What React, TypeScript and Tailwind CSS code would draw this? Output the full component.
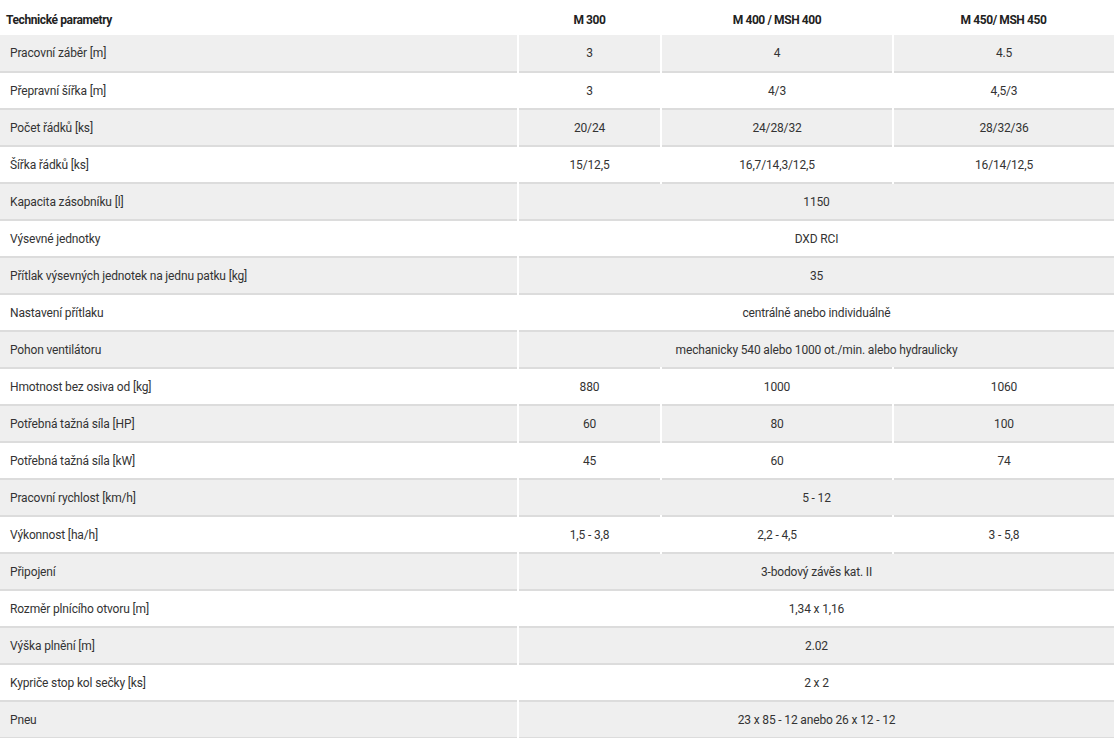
type Row = { label: string; values: string[] };

const rows: Row[] = [
  { label: 'Pracovní záběr [m]', values: ['3', '4', '4.5'] },
  { label: 'Přepravní šířka [m]', values: ['3', '4/3', '4,5/3'] },
  { label: 'Počet řádků [ks]', values: ['20/24', '24/28/32', '28/32/36'] },
  { label: 'Šířka řádků [ks]', values: ['15/12,5', '16,7/14,3/12,5', '16/14/12,5'] },
  { label: 'Kapacita zásobníku [l]', values: ['1150'] },
  { label: 'Výsevné jednotky', values: ['DXD RCI'] },
  { label: 'Přítlak výsevných jednotek na jednu patku [kg]', values: ['35'] },
  { label: 'Nastavení přítlaku', values: ['centrálně anebo individuálně'] },
  { label: 'Pohon ventilátoru', values: ['mechanicky 540 alebo 1000 ot./min. alebo hydraulicky'] },
  { label: 'Hmotnost bez osiva od [kg]', values: ['880', '1000', '1060'] },
  { label: 'Potřebná tažná síla [HP]', values: ['60', '80', '100'] },
  { label: 'Potřebná tažná síla [kW]', values: ['45', '60', '74'] },
  { label: 'Pracovní rychlost [km/h]', values: ['5 - 12'] },
  { label: 'Výkonnost [ha/h]', values: ['1,5 - 3,8', '2,2 - 4,5', '3 - 5,8'] },
  { label: 'Připojení', values: ['3-bodový závěs kat. II'] },
  { label: 'Rozměr plnícího otvoru [m]', values: ['1,34 x 1,16'] },
  { label: 'Výška plnění [m]', values: ['2.02'] },
  { label: 'Kypriče stop kol sečky [ks]', values: ['2 x 2'] },
  { label: 'Pneu', values: ['23 x 85 - 12 anebo 26 x 12 - 12'] },
];

export default function App() {
  return (
    <div className="w-[1114px] h-[738px] overflow-hidden bg-white text-[#333] font-['Roboto',sans-serif]">
      <table className="w-[1114px] table-fixed border-collapse">
        <colgroup>
          <col className="w-[518px]" />
          <col className="w-[143px]" />
          <col className="w-[232px]" />
          <col className="w-[221px]" />
        </colgroup>
        <thead>
          <tr className="h-[35px] text-[12px] font-bold tracking-[-0.4px] text-[#222]">
            <th className="text-left pl-[6px] pt-[5px]">Technické parametry</th>
            <th className="pt-[5px]">M 300</th>
            <th className="pt-[5px]">M 400 / MSH 400</th>
            <th className="pt-[5px]">M 450/ MSH 450</th>
          </tr>
        </thead>
        <tbody>
          {rows.map((r, i) => (
            <tr
              key={r.label}
              className={`h-[37px] text-[12px] tracking-[-0.15px] border-b-2 border-[#dcdcdc] ${i % 2 === 0 ? 'bg-[#efefef]' : 'bg-white'}`}
            >
              <td className="pl-[10px] border-r-2 border-white">{r.label}</td>
              {r.values.length === 1 ? (
                <td colSpan={3} className="text-center">{r.values[0]}</td>
              ) : (
                r.values.map((v, j) => (
                  <td key={j} className={`text-center ${j < 2 ? 'border-r-2 border-white' : ''}`}>
                    {v}
                  </td>
                ))
              )}
            </tr>
          ))}
        </tbody>
      </table>
    </div>
  );
}
